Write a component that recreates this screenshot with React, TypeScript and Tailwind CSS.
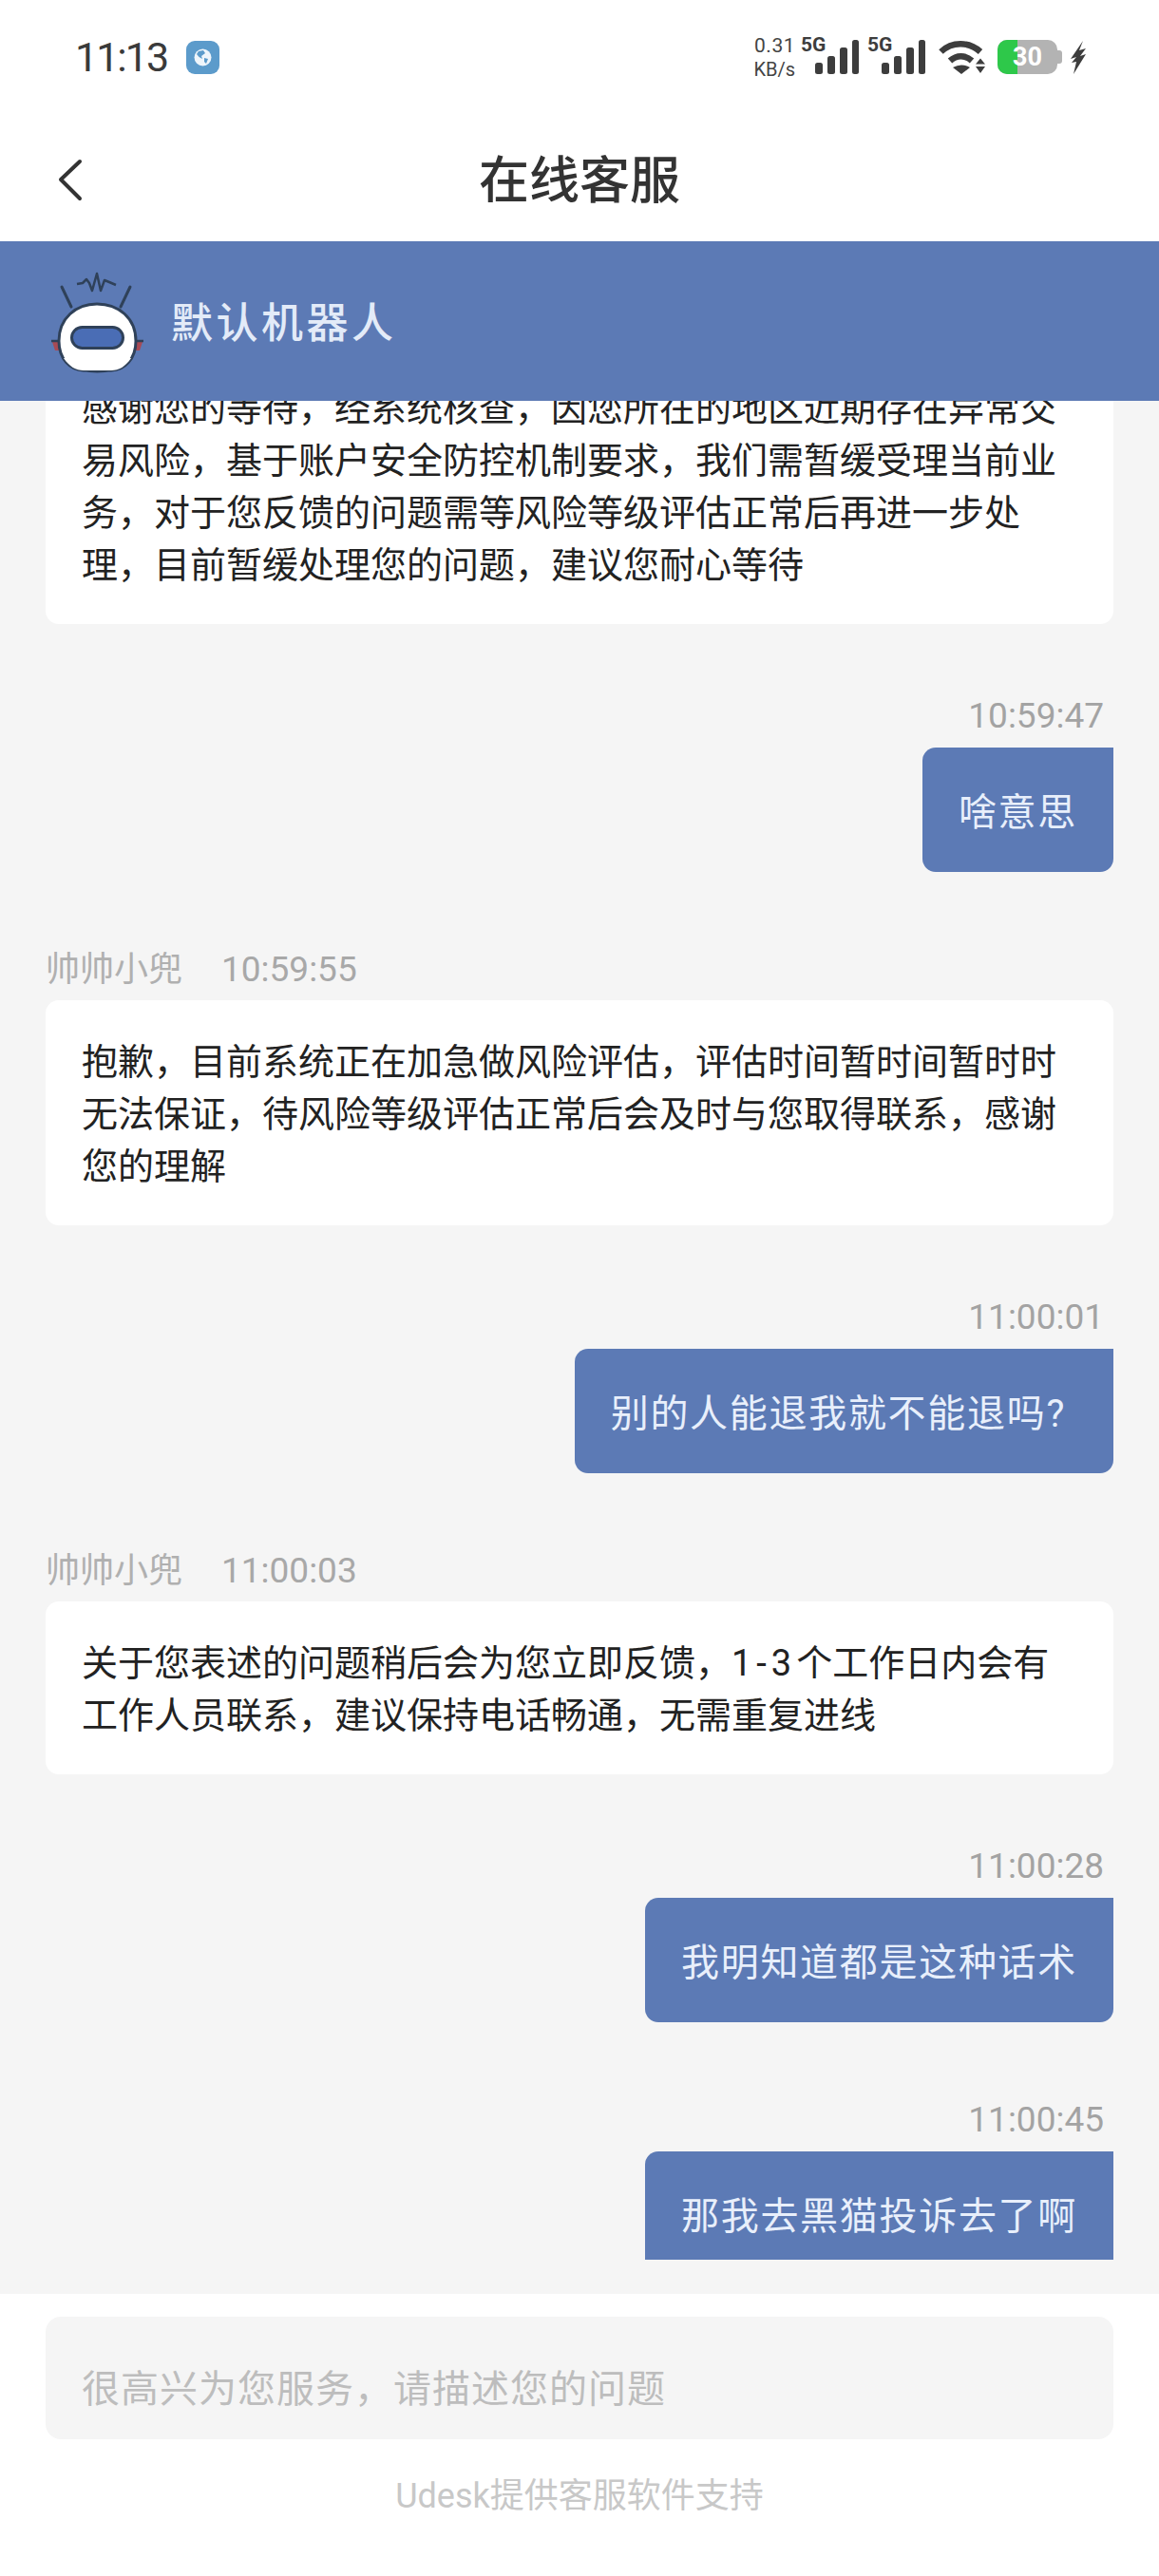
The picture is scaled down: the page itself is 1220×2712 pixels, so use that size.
import type { ReactNode } from "react";

type Message = { id: number; side: "left" | "right"; name: string; time: string; text: ReactNode };

const messages: Message[] = [
  {
    id: 1,
    side: "left",
    name: "",
    time: "",
    text: "感谢您的等待，经系统核查，因您所在的地区近期存在异常交易风险，基于账户安全防控机制要求，我们需暂缓受理当前业务，对于您反馈的问题需等风险等级评估正常后再进一步处理，目前暂缓处理您的问题，建议您耐心等待",
  },
  { id: 2, side: "right", name: "", time: "10:59:47", text: "啥意思" },
  {
    id: 3,
    side: "left",
    name: "帅帅小兜",
    time: "10:59:55",
    text: "抱歉，目前系统正在加急做风险评估，评估时间暂时间暂时时无法保证，待风险等级评估正常后会及时与您取得联系，感谢您的理解",
  },
  {
    id: 4,
    side: "right",
    name: "",
    time: "11:00:01",
    text: (
      <>
        别的人能退我就不能退吗<span className="pr-[12px]">?</span>
      </>
    ),
  },
  {
    id: 5,
    side: "left",
    name: "帅帅小兜",
    time: "11:00:03",
    text: (
      <>
        关于您表述的问题稍后会为您立即反馈，<span className="tracking-[5px]">1-3</span>个工作日内会有工作人员联系，建议保持电话畅通，无需重复进线
      </>
    ),
  },
  { id: 6, side: "right", name: "", time: "11:00:28", text: "我明知道都是这种话术" },
  { id: 7, side: "right", name: "", time: "11:00:45", text: "那我去黑猫投诉去了啊" },
];

function Signal() {
  return (
    <div className="relative w-[61px] h-[36px]">
      <span className="absolute left-0 top-[-7px] text-[21px] leading-[24px] font-bold text-[#3d3d3d]">5G</span>
      <svg className="absolute left-0 top-0" width="61" height="36" viewBox="0 0 61 36" fill="#3d3d3d">
        <rect x="15" y="24" width="8" height="12" rx="2.5" />
        <rect x="28" y="17" width="8" height="19" rx="2.5" />
        <rect x="41" y="8" width="8" height="28" rx="2.5" />
        <rect x="54" y="0" width="7" height="36" rx="2.5" />
      </svg>
    </div>
  );
}

function Wifi() {
  return (
    <svg width="49" height="36" viewBox="0 0 49 36" fill="none">
      <path d="M2.5 12.5 C14 1.5 32 1.5 44 12.5" stroke="#3d3d3d" strokeWidth="6.5" />
      <path d="M12 22 C19 15.5 28 15.5 35 22" stroke="#3d3d3d" strokeWidth="6.5" />
      <path d="M15 29 Q24 24 33 29 L24 36 Z" fill="#3d3d3d" />
      <path d="M39 25.5 L49 25.5 L44 19.5 Z M39 28 L49 28 L44 35 Z" fill="#3d3d3d" />
    </svg>
  );
}

function Robot() {
  return (
    <svg width="130" height="130" viewBox="0 0 130 130" fill="none">
      <path d="M41 26 L47 25 L51 21 L54 25 L57 33 L62 15 L66 33 L70 22 L75 24 L82 27" stroke="#2f4159" strokeWidth="2.5" strokeLinejoin="round" />
      <path d="M25 29 L35 50 M97 29 L87 50" stroke="#2f4159" strokeWidth="3" strokeLinecap="round" />
      <path d="M15 87 L22 87 L22 96 L18 96 Z M110 87 L103 87 L103 96 L107 96 Z" fill="#a84a55" />
      <path d="M14 86 L23 86 M102 86 L111 86" stroke="#2f4159" strokeWidth="2.5" />
      <path d="M44 116 Q62 123 81 116 Z" fill="#2f4159" />
      <path
        d="M22 86 C22 62 40 47 62 47 C85 47 103 62 103 86 C103 105 91 117 77 117 L48 117 C34 117 22 105 22 86 Z"
        fill="#ffffff"
        stroke="#2f4159"
        strokeWidth="3"
      />
      <path d="M27 104 C33 113 40 117 48 117 L77 117 C85 117 92 113 98 104 Z" fill="#ffffff" />
      <rect x="35.5" y="71.5" width="54" height="22" rx="11" fill="#4a6db5" stroke="#2f4159" strokeWidth="3" />
    </svg>
  );
}

function Meta({ side, name, time }: { side: string; name: string; time: string }) {
  if (side === "right") {
    return <div className="h-[44px] mb-[11px] pr-[10px] text-right text-[37px] leading-[44px] text-[#a3a3a3]">{time}</div>;
  }
  return (
    <div className="h-[44px] mb-[10px] flex gap-[41px] text-[36px] leading-[44px] text-[#b0b0b0]">
      <span>{name}</span>
      <span className="text-[37px] text-[#a8a8a8]">{time}</span>
    </div>
  );
}

export default function App() {
  return (
    <div className="w-[1220px] h-[2712px] bg-white flex flex-col overflow-hidden font-['Roboto','Noto_Sans_CJK_SC',sans-serif]">
      {/* status bar */}
      <div className="h-[120px] flex items-center justify-between pl-[79px] pr-[77px]">
        <div className="flex items-center gap-[20px]">
          <span className="text-[43px] tracking-[-2px] text-[#3a3a3a]">11:13</span>
          <div className="w-[35px] h-[35px] rounded-[9px] bg-[#5c9bcb] flex items-center justify-center">
            <svg width="19" height="19" viewBox="0 0 19 19">
              <circle cx="9.5" cy="9.5" r="9" fill="#eef5fb" />
              <path d="M5 3 L10 2 L12 5 L8 8 L9 11 L5.5 9 L3 6 Z M11 10 L15 11 L13 16 L11 14 Z" fill="#5c9bcb" />
            </svg>
          </div>
        </div>
        <div className="flex items-center">
          <div className="w-[44px] mr-[6px] text-[#444444] text-right">
            <div className="text-[21px] leading-[27px] tracking-[0.5px]">0.31</div>
            <div className="text-[20px] leading-[23px]">KB/s</div>
          </div>
          <Signal />
          <div className="w-[9px]" />
          <Signal />
          <div className="w-[14px]" />
          <Wifi />
          <div className="w-[13px]" />
          <div className="flex items-center">
            <div className="relative w-[63px] h-[36px] rounded-[10px] bg-[#b3b3b3] overflow-hidden">
              <div className="absolute left-0 top-0 bottom-0 w-[21px] bg-[#2ec84a]" />
              <div className="absolute inset-0 flex items-center justify-center text-[27px] font-bold text-white">30</div>
            </div>
            <div className="w-[5px] h-[14px] rounded-r-[3px] bg-[#b3b3b3]" />
          </div>
          <svg className="ml-[9px]" width="16" height="35" viewBox="0 0 16 35" fill="#3d3d3d">
            <path d="M13 0 L0 19 L6 17 L1 23 L6 22 L3 35 L16 14 L10 16 L16 8 L9 10 Z" />
          </svg>
        </div>
      </div>

      {/* nav */}
      <div className="relative h-[134px] flex items-center justify-center pt-[10px]">
        <svg className="absolute left-[58px] top-[46px]" width="30" height="46" viewBox="0 0 30 46" fill="none">
          <path d="M26 4 L6 23 L26 43" stroke="#333333" strokeWidth="4" strokeLinecap="round" strokeLinejoin="round" />
        </svg>
        <span className="text-[53px] font-medium text-[#333333]">在线客服</span>
      </div>

      {/* robot bar */}
      <div className="relative z-10 h-[168px] bg-[#5c7ab5] flex items-center pl-[40px]">
        <Robot />
        <span className="ml-[10px] mt-[6px] text-[44px] font-medium tracking-[3.5px] text-[#e3ebf8]">默认机器人</span>
      </div>

      {/* chat */}
      <div className="h-[1993px] bg-[#f5f5f5] pb-[36px] px-[48px]">
        <div className="h-full overflow-hidden">
          {messages.map((m, i) =>
            m.side === "left" ? (
              <div key={m.id} className={i === 0 ? "-mt-[57px]" : "pt-[81px]"}>
                {i > 0 && <Meta side={m.side} name={m.name} time={m.time} />}
                <div className="bg-white rounded-[14px] pt-[38px] pb-[34px] px-[38px] text-[38px] leading-[55px] text-[#222222]">
                  {m.text}
                </div>
              </div>
            ) : (
              <div key={m.id} className={messages[i - 1].side === "right" ? "pt-[81px]" : "pt-[75px]"}>
                <Meta side={m.side} name={m.name} time={m.time} />
                <div className="flex justify-end">
                  <div className="bg-[#5c7ab5] rounded-[14px] rounded-tr-none pt-[41px] pb-[34px] px-[38px] text-[40px] leading-[56px] tracking-[1.7px] text-[#e8effb] whitespace-nowrap">
                    {m.text}
                  </div>
                </div>
              </div>
            ),
          )}
        </div>
      </div>

      {/* input */}
      <div className="px-[48px] pt-[24px]">
        <div className="h-[129px] rounded-[16px] bg-[#f5f5f5] flex items-center px-[38px] pt-[24px] text-[40px] tracking-[1px] text-[#bdbdbd]">
          很高兴为您服务，请描述您的问题
        </div>
      </div>
      <div className="mt-[38px] text-center text-[36px] leading-[44px] text-[#c8c8c8]">Udesk提供客服软件支持</div>
    </div>
  );
}
